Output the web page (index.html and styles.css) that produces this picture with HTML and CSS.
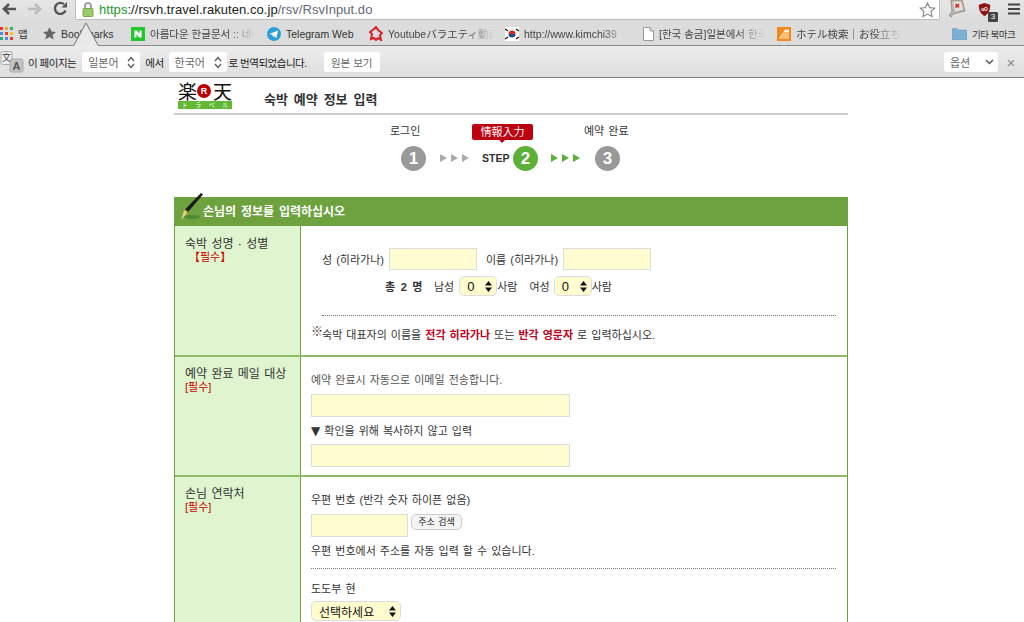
FILE: index.html
```html
<!DOCTYPE html>
<html lang="ko">
<head>
<meta charset="utf-8">
<title>RsvInput</title>
<link rel="stylesheet" href="styles.css">
</head>
<body>
<header class="chrome">
  <div class="toolbar">
    <div class="nav">
      <svg width="16" height="14" viewBox="0 0 16 14"><path d="M15 7H4M8 2L3 7l5 5" fill="none" stroke="#555" stroke-width="2.6"/></svg>
      <svg width="16" height="14" viewBox="0 0 16 14"><path d="M1 7h11M8 2l5 5-5 5" fill="none" stroke="#bbb" stroke-width="2.6"/></svg>
      <svg width="15" height="15" viewBox="0 0 15 15"><path d="M12.500 9.500A5.500 5.500 0 1 1 11 3.200" fill="none" stroke="#555" stroke-width="2.400"/><path d="M8.500 6.500H14V1z" fill="#555"/></svg>
    </div>
    <div class="omnibox">
      <svg class="lock" width="12" height="15" viewBox="0 0 12 15"><path d="M3 7V4a3 3 0 0 1 6 0v3" fill="none" stroke="#8d8d8d" stroke-width="1.600"/><rect x="1" y="6.500" width="10" height="8" rx="1" fill="#9ccc6c" stroke="#7aa84f"/></svg>
      <span class="url"><span class="https">https</span><span class="dark">://rsvh.travel.rakuten.co.jp</span>/rsv/RsvInput.do</span>
      <svg class="star" width="17" height="17" viewBox="0 0 18 17"><path d="M9 1.500l2.300 5 5.400.6-4 3.600 1.100 5.300L9 13.300 4.200 16l1.100-5.300-4-3.600 5.400-.6z" fill="#fff" stroke="#8a8a8a" stroke-width="1.200"/></svg>
    </div>
    <div class="ext">
      <svg width="18" height="18" viewBox="0 0 18 18"><path d="M3 0h11l3 11-12 3-2 3-2-2 3-3z" fill="#bdb8b0" stroke="#85817a" stroke-width=".8"/><path d="M5 1.500h8l2 8-8 2z" fill="#e4dfd8"/><path d="M7.500 4l3.500 3.500M11 4L7.500 7.500" stroke="#d22" stroke-width="1.600"/></svg>
      <span class="ublock">
        <svg width="13" height="15" viewBox="0 0 16 17"><path d="M1 2.500L8 .5l7 2c0 7-2 11-7 14-5-3-7-7-7-14z" fill="#8f1515"/><text x="8" y="10" class="ublock-text">uO</text></svg>
        <span class="badge">3</span>
      </span>
      <svg width="12" height="12" viewBox="0 0 12 12"><path d="M0 1.500h12M0 6h12M0 10.500h12" stroke="#444" stroke-width="2.200"/></svg>
    </div>
  </div>
  <nav class="bookmarks">
    <span class="bm bm-apps">
      <svg width="13" height="13" viewBox="0 0 13 13"><g><rect width="3" height="3" fill="#e33"/><rect x="5" width="3" height="3" fill="#f5a623"/><rect x="10" width="3" height="3" fill="#3a7"/><rect y="5" width="3" height="3" fill="#4a8fe0"/><rect x="5" y="5" width="3" height="3" fill="#e33"/><rect x="10" y="5" width="3" height="3" fill="#f5c623"/><rect y="10" width="3" height="3" fill="#3a7"/><rect x="5" y="10" width="3" height="3" fill="#4a8fe0"/><rect x="10" y="10" width="3" height="3" fill="#e33"/></g></svg>
      <span>앱</span>
    </span>
    <span class="bm bm-star">
      <svg width="13" height="13" viewBox="0 0 13 13"><path d="M6.500 0l2 4.400 4.500.5-3.400 3 1 4.600-4.100-2.400-4.100 2.400 1-4.600L0 4.900l4.500-.5z" fill="#666"/></svg>
      <span>Bookmarks</span>
    </span>
    <span class="bm bm-naver">
      <svg width="14" height="14" viewBox="0 0 14 14"><rect width="14" height="14" fill="#22c72e"/><path d="M3.500 3.500h2.500l2.500 3.500V3.500h2v7H8L5.500 7v3.500h-2z" fill="#fff"/></svg>
      <span class="fade">아름다운 한글문서 :: 네이</span>
    </span>
    <span class="bm bm-tele">
      <svg width="14" height="14" viewBox="0 0 14 14"><circle cx="7" cy="7" r="7" fill="#2a9fd8"/><path d="M2.500 7l8.500-3.500-1.500 7.500-2.500-2-1 1.500-.5-2.500z" fill="#fff"/></svg>
      <span>Telegram Web</span>
    </span>
    <span class="bm bm-yt">
      <svg width="14" height="15" viewBox="0 0 14 15"><path d="M7 1l2 3 4 3-2 2 1 5-3-2-2 2-2-2-3 1 1-5-2-2 4-3z" fill="none" stroke="#d2232a" stroke-width="2"/></svg>
      <span class="fade">Youtubeバラエティ動画</span>
    </span>
    <span class="bm bm-kr">
      <svg width="14" height="14" viewBox="0 0 14 14"><rect width="14" height="14" fill="#fff"/><path d="M3.500 7a3.500 3.500 0 0 1 7 0z" fill="#d22"/><path d="M3.500 7a3.500 3.500 0 0 0 7 0z" fill="#1a4fa0"/><path d="M0 2l3 2M11 2l3 2M0 12l3-2M11 12l3-2" stroke="#111" stroke-width="1.200"/></svg>
      <span class="fade">http://www.kimchi39</span>
    </span>
    <span class="bm bm-doc">
      <svg width="11" height="14" viewBox="0 0 11 14"><path d="M.5.500h6.500l3.500 3.500v9.500H.5z" fill="#fff" stroke="#999"/><path d="M7 .5V4h3.500" fill="none" stroke="#999"/></svg>
      <span class="fade">[한국 송금]일본에서 한국</span>
    </span>
    <span class="bm bm-hotel">
      <svg width="14" height="14" viewBox="0 0 14 14"><rect width="14" height="14" fill="#f08a1d"/><path d="M8 2.500h4v9H2z" fill="#fff2d8"/><path d="M6 6h6M5 8h7M4 10h8" stroke="#f08a1d"/></svg>
      <span class="fade">ホテル検索｜お役立ち情</span>
    </span>
    <span class="bm bm-other">
      <svg width="15" height="12" viewBox="0 0 15 12"><path d="M0 1.500A1 1 0 0 1 1 .5h4l1.500 1.500H14a1 1 0 0 1 1 1V11a1 1 0 0 1-1 1H1a1 1 0 0 1-1-1z" fill="#7fb0d4" stroke="#5f90b4" stroke-width=".5"/></svg>
      <span class="other-text">기타 북마크</span>
    </span>
    <svg class="notch" width="50" height="24" viewBox="0 0 50 24"><path d="M12.500 24L25 1l12.500 23" fill="#e9e9e9" stroke="#777"/></svg>
  </nav>
  <div class="translate">
    <svg class="tr-icon" width="24" height="24" viewBox="0 0 24 24"><rect x="1" y="1.500" width="11" height="13" rx="1.500" fill="#eee" stroke="#aaa"/><rect x="10" y="9" width="13" height="13" rx="1.500" fill="#c4c4c4" stroke="#aaa"/><text x="2" y="11" class="tr-zh">文</text><text x="12.500" y="20" class="tr-a">A</text></svg>
    <span class="tr-label tr-first">이 페이지는</span>
    <span class="tr-select tr-lang">일본어<svg width="8" height="13" viewBox="0 0 8 13"><path d="M1 5l3-3.500L7 5M1 8l3 3.500L7 8" fill="none" stroke="#555" stroke-width="1.200"/></svg></span>
    <span class="tr-label tr-from">에서</span>
    <span class="tr-select tr-lang">한국어<svg width="8" height="13" viewBox="0 0 8 13"><path d="M1 5l3-3.500L7 5M1 8l3 3.500L7 8" fill="none" stroke="#555" stroke-width="1.200"/></svg></span>
    <span class="tr-label tr-tail">로 번역되었습니다.</span>
    <span class="tr-select tr-orig">원본 보기</span>
    <span class="tr-select tr-opt">옵션<svg width="9" height="6" viewBox="0 0 9 6"><path d="M1 1l3.500 3.500L8 1" fill="none" stroke="#555" stroke-width="1.400"/></svg></span>
    <span class="tr-close">×</span>
  </div>
</header>

<main class="page">
  <div class="brand">
    <div class="logo">
      <div class="logo-top"><span>楽</span><i>R</i><span>天</span></div>
      <div class="logo-sub"><span>ト</span><span>ラ</span><span>ベ</span><span>ル</span></div>
    </div>
    <h1>숙박 예약 정보 입력</h1>
  </div>

  <div class="steps">
    <div class="step-labels">
      <span class="sl-login">로그인</span>
      <span class="sl-now">情報入力</span>
      <span class="sl-done">예약 완료</span>
    </div>
    <div class="step-track">
      <b class="num">1</b>
      <svg class="arrows" width="29" height="8" viewBox="0 0 29 8"><path d="M0 0l7 4-7 4zM11 0l7 4-7 4zM22 0l7 4-7 4z"/></svg>
      <span class="step-word">STEP</span>
      <b class="num num-on">2</b>
      <svg class="arrows arrows-on" width="29" height="8" viewBox="0 0 29 8"><path d="M0 0l7 4-7 4zM11 0l7 4-7 4zM22 0l7 4-7 4z"/></svg>
      <b class="num">3</b>
    </div>
  </div>

  <section class="form">
    <h2>
      <svg class="pen" width="26" height="30" viewBox="0 0 26 30"><ellipse cx="13" cy="25" rx="8" ry="2" fill="#4d8a34"/><path d="M22 1l2 1.500L9 20l-3-2.500z" fill="#1a1a1a"/><path d="M6 17.500l3 2.500-1 1.200-3-2.500z" fill="#d9b04a"/><path d="M5 18.700l3 2.500L2 28z" fill="#ecd27c"/></svg>
      손님의 정보를 입력하십시오
    </h2>

    <div class="row row-name">
      <div class="th th-first">숙박 성명 · 성별<span class="req req-wide">【필수】</span></div>
      <div class="td">
        <div class="name-line">
          <span class="lbl-sei">성 (히라가나)</span><span class="input in-name"></span>
          <span class="lbl-mei">이름 (히라가나)</span><span class="input in-name"></span>
        </div>
        <div class="count-line">
          <b>총 2 명</b>
          <span class="gender">남성</span><span class="sel sel-num">0<svg width="7" height="11" viewBox="0 0 7 11"><path d="M3.500 0L7 4.500H0zM3.500 11L0 6.500h7z" fill="#111"/></svg></span><span>사람</span>
          <span class="gender gender-f">여성</span><span class="sel sel-num">0<svg width="7" height="11" viewBox="0 0 7 11"><path d="M3.500 0L7 4.500H0zM3.500 11L0 6.500h7z" fill="#111"/></svg></span><span>사람</span>
        </div>
        <hr class="dots">
        <p class="note"><span class="mark">※</span>숙박 대표자의 이름을 <em>전각 히라가나</em> 또는 <em>반각 영문자</em> 로 입력하십시오.</p>
      </div>
    </div>

    <div class="row row-mail">
      <div class="th">예약 완료 메일 대상<span class="req">[필수]</span></div>
      <div class="td">
        <p class="muted">예약 완료시 자동으로 이메일 전송합니다.</p>
        <span class="input in-mail"></span>
        <p class="confirm"><span class="tri">▼</span> 확인을 위해 복사하지 않고 입력</p>
        <span class="input in-mail"></span>
      </div>
    </div>

    <div class="row row-contact">
      <div class="th">손님 연락처<span class="req">[필수]</span></div>
      <div class="td">
        <p class="zip-label">우편 번호 (반각 숫자 하이픈 없음)</p>
        <div class="zip-line"><span class="input in-zip"></span><span class="btn">주소 검색</span></div>
        <p class="zip-help">우편 번호에서 주소를 자동 입력 할 수 있습니다.</p>
        <hr class="dots dots-contact">
        <p class="pref">도도부 현</p>
        <span class="sel sel-pref">선택하세요<svg width="7" height="11" viewBox="0 0 7 11"><path d="M3.500 0L7 4.500H0zM3.500 11L0 6.500h7z" fill="#111"/></svg></span>
      </div>
    </div>
  </section>
</main>
</body>
</html>
```

FILE: styles.css
```css
* { box-sizing: border-box; }
html, body { margin: 0; padding: 0; height: 622px; overflow: hidden; background: #fff; }
body { font-family: "Liberation Sans", "Noto Sans CJK KR", sans-serif; font-size: 11px; color: #333; }
svg { display: block; flex: none; }
h1, h2, p { margin: 0; font-weight: normal; }

.chrome { height: 78px; display: flex; flex-direction: column; }
.toolbar { height: 22px; display: flex; background: linear-gradient(#e6e6e6, #dcdcdc); }
.nav { width: 75px; display: flex; align-items: center; gap: 10px; padding: 0 0 5px 1px; }
.omnibox { width: 865px; height: 20px; background: #fff; border: 1px solid #bdbdbd; border-top: 0; border-radius: 0 0 2px 2px; display: flex; align-items: center; padding-left: 6px; }
.lock { margin-right: 5px; }
.url { font-size: 13px; color: #667; flex: 1; white-space: nowrap; letter-spacing: .05px; }
.https { color: #1a9a2a; }
.dark { color: #222; }
.star { margin-right: 3px; }
.ext { flex: 1; display: flex; align-items: center; padding: 0 0 4px 8px; }
.ublock { position: relative; margin: 0 17px 0 12px; }
.ublock-text { font: bold 6px "Liberation Sans", sans-serif; fill: #fff; text-anchor: middle; }
.badge { position: absolute; left: 10px; top: 10px; width: 10px; height: 10px; background: #444; color: #fff; font-size: 8px; line-height: 10px; text-align: center; border-radius: 1px; }

.bookmarks { position: relative; height: 24px; display: flex; align-items: center; background: #dcdcdc; border-bottom: 1px solid #8a8a8a; font-size: 10.500px; color: #333; }
.bm { display: flex; align-items: center; gap: 5px; white-space: nowrap; overflow: hidden; }
.fade { width: 106px; color: #444; overflow: hidden; -webkit-mask-image: linear-gradient(to right, #000 72%, transparent); mask-image: linear-gradient(to right, #000 72%, transparent); }
.bm-apps { width: 43px; }
.bm-star { width: 88px; }
.bm-naver { width: 136px; }
.bm-tele { width: 102px; }
.bm-yt { width: 136px; }
.bm-kr { width: 138px; }
.bm-doc { width: 134px; }
.bm-hotel { width: 175px; }
.bm-other { flex: 1; }
.other-text { font-size: 9.500px; letter-spacing: -.5px; }
.notch { position: absolute; left: 61px; top: 0; }

.translate { height: 32px; padding-top: 1px; display: flex; align-items: center; background: linear-gradient(#ececec, #dedede); border-bottom: 1px solid #7e7e7e; font-size: 10.500px; color: #222; }
.tr-icon { margin-right: 4px; }
.tr-zh { font: 9px "Noto Sans CJK SC", sans-serif; fill: #444; }
.tr-a { font: bold 11px "Liberation Sans", sans-serif; fill: #555; }
.tr-label { letter-spacing: -.5px; white-space: nowrap; }
.tr-first { margin-right: 6px; }
.tr-from { margin-right: 5px; }
.tr-select { height: 20px; background: #fff; border-radius: 3px; display: flex; align-items: center; color: #666; font-size: 11px; }
.tr-lang { width: 58px; padding: 0 5px 0 6px; justify-content: space-between; margin-right: 5px; }
.tr-tail { margin-left: -3px; margin-right: 17px; }
.tr-orig { width: 56px; justify-content: center; font-size: 10.500px; }
.tr-opt { width: 54px; margin-left: auto; padding: 0 4px 0 6px; justify-content: space-between; }
.tr-close { width: 26px; text-align: center; font-size: 15px; color: #888; }

.page { width: 674px; margin: 0 0 0 174px; }
.brand { height: 37px; display: flex; border-bottom: 2px solid #ccc; padding: 3px 0 0 4px; }
.logo { width: 55px; }
.logo-top { display: flex; align-items: center; height: 20px; font: 19px/20px "Noto Sans CJK JP", sans-serif; color: #111; }
.logo-top i { width: 14px; height: 14px; margin: 0 2px 0 0; border-radius: 50%; background: #bf0000; color: #fff; font: bold 9px/14px "Liberation Sans", sans-serif; text-align: center; flex: none; }
.logo-sub { height: 8px; width: 54px; background: #62b733; color: #fff; font: 6px/8px "Noto Sans CJK JP", sans-serif; display: flex; justify-content: space-around; overflow: hidden; }
h1 { font-size: 13px; font-weight: bold; color: #333; margin: 8px 0 0 31px; word-spacing: 2.300px; }

.steps { height: 82px; padding-top: 9px; }
.step-labels { height: 21px; display: flex; font-size: 11px; color: #333; align-items: flex-start; }
.sl-login { margin-left: 216px; width: 82px; line-height: 14px; }
.sl-now { width: 61px; height: 16px; background: #bf0010; color: #fff; border-radius: 2px; text-align: center; line-height: 15px; position: relative; font-family: "Noto Sans CJK JP", sans-serif; }
.sl-now::after { content: ""; position: absolute; left: 27px; top: 16px; border: 3px solid transparent; border-top-color: #bf0010; }
.sl-done { margin-left: 51px; line-height: 14px; word-spacing: 1px; }
.step-track { display: flex; align-items: center; height: 26px; padding-left: 227px; }
.num { width: 25px; height: 25px; border-radius: 50%; background: #999; color: #fff; font-size: 17px; line-height: 25px; text-align: center; flex: none; }
.num-on { background: #5ab136; }
.arrows { fill: #aaa; margin: 0 13px 0 14px; }
.arrows-on { fill: #5ab136; margin: 0 15px 0 13px; }
.step-word { font-size: 10.500px; font-weight: bold; color: #333; width: 31px; }

.form { border-left: 1px solid #6da23f; border-right: 1px solid #6da23f; }
.form h2 { position: relative; height: 29px; margin: 0 -1px; padding: 1px 0 0 29px; background: #6da23f; color: #fff; font-size: 12px; font-weight: bold; line-height: 28px; word-spacing: 1.500px; }
.pen { position: absolute; left: 5px; top: -5px; }
.row { display: grid; grid-template-columns: 126px 1fr; border-bottom: 2px solid #8dbb66; }
.row-name { height: 131px; }
.row-mail { height: 120px; }
.row-contact { height: 160px; border-bottom: 0; }
.th { background: #def5cf; border-right: 1px solid #6da23f; padding: 11px 9px 0 10px; font-size: 12px; line-height: 13px; color: #333; word-spacing: 1px; }
.th-first { padding-top: 12px; }
.req { display: block; color: #c00; font-size: 11px; line-height: 13px; }
.req-wide { margin-left: 4px; }
.td { padding: 0 11px 0 10px; min-width: 0; word-spacing: 1px; }
.input { display: block; background: #fffdd0; border: 1px solid #ddd; flex: none; }

.name-line { display: flex; align-items: center; gap: 4px; padding: 22px 0 0 11px; font-size: 11px; white-space: nowrap; }
.lbl-sei { width: 63px; }
.lbl-mei { width: 73px; margin-left: 5px; }
.in-name { width: 88px; height: 22px; }
.count-line { display: flex; align-items: center; height: 20px; margin-top: 6px; padding-left: 74px; }
.count-line b { width: 49px; word-spacing: 2.500px; white-space: nowrap; }
.gender { margin-right: 5px; }
.gender-f { margin-left: 12px; margin-right: 4px; }
.sel { display: flex; align-items: center; justify-content: space-between; background: #fffdd0; border: 1px solid #ddd; border-radius: 5px; color: #111; }
.sel-num { width: 38px; height: 20px; padding: 0 4px 0 7px; font-size: 13px; }
.dots { border: 0; border-top: 1px dotted #777; margin: 19px 0 0 11px; height: 0; }
.note { margin-top: 9px; }
.mark { font-size: 12px; position: relative; top: -3px; margin-right: -1px; }
.note em { font-style: normal; font-weight: bold; color: #c00020; }

.muted { padding-top: 16px; line-height: 15px; color: #555; }
.in-mail { width: 259px; height: 23px; margin-top: 6px; }
.confirm { margin-top: 7px; line-height: 15px; white-space: nowrap; }
.tri { font: 12px/15px "DejaVu Sans", sans-serif; }
.in-mail + .confirm + .in-mail { margin-top: 5px; }

.zip-label { padding-top: 16px; line-height: 15px; }
.zip-line { display: flex; align-items: flex-start; gap: 3px; margin-top: 6px; }
.in-zip { width: 97px; height: 23px; }
.btn { height: 16px; width: 51px; border: 1px solid #ccc; border-radius: 5px; background: #f4f4f4; font-size: 9px; line-height: 14px; text-align: center; color: #222; }
.zip-help { margin-top: 7px; line-height: 15px; }
.dots-contact { margin: 9px 0 0; }
.pref { margin-top: 13px; line-height: 15px; }
.sel-pref { width: 90px; height: 20px; margin-top: 4px; padding: 0 4px 0 7px; font-size: 12px; }
```
